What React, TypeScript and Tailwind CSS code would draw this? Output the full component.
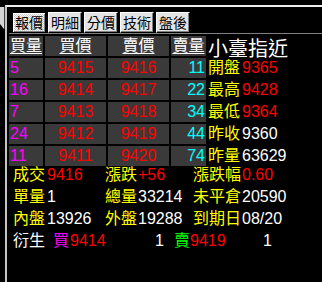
import React from "react";

const F = "font-['Liberation_Sans','Noto_Sans_CJK_TC',sans-serif]";

const rows = [
  { bq: "5", bp: "9415", sp: "9416", sq: "11", label: "開盤", val: "9365", vc: "text-[#ff0000]" },
  { bq: "16", bp: "9414", sp: "9417", sq: "22", label: "最高", val: "9428", vc: "text-[#ff0000]" },
  { bq: "7", bp: "9413", sp: "9418", sq: "34", label: "最低", val: "9364", vc: "text-[#ff0000]" },
  { bq: "24", bp: "9412", sp: "9419", sq: "44", label: "昨收", val: "9360", vc: "text-white" },
  { bq: "11", bp: "9411", sp: "9420", sq: "74", label: "昨量", val: "63629", vc: "text-white" },
];

const tabs = ["報價", "明細", "分價", "技術", "盤後"];

export default function App() {
  return (
    <div className={`w-[322px] h-[282px] bg-black overflow-hidden flex ${F}`}>
      {/* left stub */}
      <div className="w-[5px] shrink-0">
        <div className="mt-[7px] h-[22px] w-[5px] bg-[#d4d4d4] border-r border-[#404040] relative">
          <svg className="absolute right-0 bottom-0" width="4" height="5" viewBox="0 0 4 5">
            <path d="M0 0 L4 5 L0 5 Z" fill="#000" />
          </svg>
        </div>
      </div>
      {/* main */}
      <div className="flex-1 mt-[5px] border-t-2 border-t-[#ececec] border-l-2 border-l-[#c4c4c4] flex flex-col pl-[2px]">
        {/* tabs */}
        <div className="mt-[5px] h-[22px] border-b border-[#808080] flex items-start gap-[2px] pl-[3px]">
          {tabs.map((t, i) => (
            <div
              key={t}
              className={`w-[34px] h-[21px] flex items-center justify-center text-[14px] leading-none text-black border ${
                i === 0
                  ? "border-black bg-[repeating-conic-gradient(#ffffff_0_25%,#c8c8c8_0_50%)] bg-[length:2px_2px] shadow-[inset_1px_1px_0_#ffffff,inset_-1px_-1px_0_#808080]"
                  : "border-t-white border-l-white border-b-black border-r-black bg-[#e4e4e4] shadow-[inset_-1px_-1px_0_#808080]"
              }`}
            >
              {t}
            </div>
          ))}
        </div>
        {/* table */}
        <div className="mt-[2px] grid grid-cols-[34px_61px_61px_35px_1fr] gap-x-[2px] gap-y-[2px] auto-rows-[20px]">
          <div className="bg-[#3a3a3a] text-white text-[16px] leading-[20px] text-center underline underline-offset-[2px]">買量</div>
          <div className="bg-[#3a3a3a] text-white text-[16px] leading-[20px] text-center underline underline-offset-[2px]">買價</div>
          <div className="bg-[#3a3a3a] text-white text-[16px] leading-[20px] text-center underline underline-offset-[2px]">賣價</div>
          <div className="bg-[#3a3a3a] text-white text-[16px] leading-[20px] text-center underline underline-offset-[2px]">賣量</div>
          <div className="text-white text-[20px] leading-[20px] pt-[3px] whitespace-nowrap">小臺指近</div>
          {rows.map((r) => (
            <React.Fragment key={r.bp}>
              <div className="bg-[#3a3a3a] text-[#ff00ff] text-[16px] leading-[20px] pl-[1px]">{r.bq}</div>
              <div className="bg-[#3a3a3a] text-[#ff0000] text-[16px] leading-[20px] text-center">{r.bp}</div>
              <div className="bg-[#3a3a3a] text-[#ff0000] text-[16px] leading-[20px] text-center">{r.sp}</div>
              <div className="bg-[#3a3a3a] text-[#00ffff] text-[16px] leading-[20px] text-right pr-[1px]">{r.sq}</div>
              <div className="text-[16px] leading-[20px] whitespace-nowrap flex">
                <span className="text-[#ffff00] w-[34px]">{r.label}</span>
                <span className={r.vc}>{r.val}</span>
              </div>
            </React.Fragment>
          ))}
        </div>
        {/* bottom info */}
        <div className="mt-[-2px] pl-[4px] text-[16px] leading-[22px] whitespace-nowrap">
          <div className="grid grid-cols-[34px_58px_33px_55px_49px_1fr] h-[22px]">
            <span className="text-[#ffff00]">成交</span>
            <span className="text-[#ff0000]">9416</span>
            <span className="text-[#ffff00]">漲跌</span>
            <span className="text-[#ff0000]">+56</span>
            <span className="text-[#ffff00]">漲跌幅</span>
            <span className="text-[#ff0000]">0.60</span>
          </div>
          <div className="grid grid-cols-[34px_58px_33px_55px_49px_1fr] h-[22px]">
            <span className="text-[#ffff00]">單量</span>
            <span className="text-white">1</span>
            <span className="text-[#ffff00]">總量</span>
            <span className="text-white">33214</span>
            <span className="text-[#ffff00]">未平倉</span>
            <span className="text-white">20590</span>
          </div>
          <div className="grid grid-cols-[34px_58px_33px_55px_49px_1fr] h-[22px]">
            <span className="text-[#ffff00]">內盤</span>
            <span className="text-white">13926</span>
            <span className="text-[#ffff00]">外盤</span>
            <span className="text-white">19288</span>
            <span className="text-[#ffff00]">到期日</span>
            <span className="text-white">08/20</span>
          </div>
          <div className="flex h-[21px] leading-[21px]">
            <span className="text-white w-[40px]">衍生</span>
            <span className="text-[#ff00ff] w-[17px]">買</span>
            <span className="text-[#ff0000] w-[77px]">9414</span>
            <span className="text-white w-[17px] text-right">1</span>
            <span className="w-[10px]" />
            <span className="text-[#00ff00] w-[16px]">賣</span>
            <span className="text-[#ff0000] w-[73px]">9419</span>
            <span className="text-white">1</span>
          </div>
        </div>
      </div>
    </div>
  );
}
